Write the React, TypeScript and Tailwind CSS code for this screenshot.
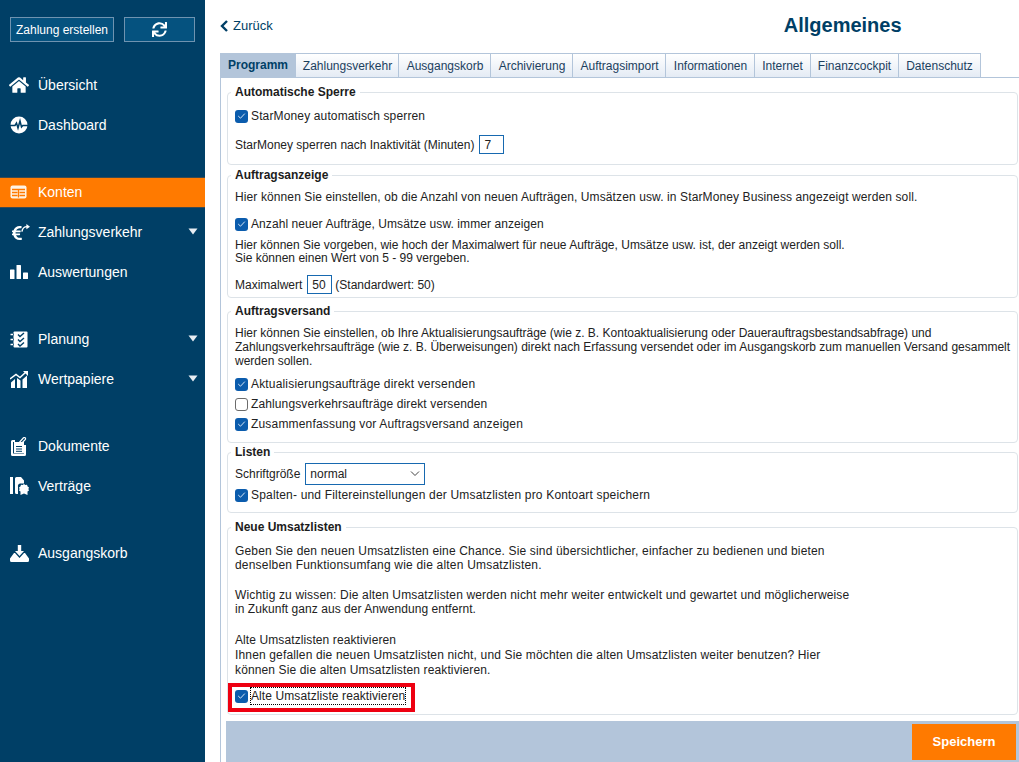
import React from "react";
import { FaHome, FaSync, FaEuroSign } from "react-icons/fa";

const Caret = () => (
  <svg width="10" height="7" viewBox="0 0 10 7" className="absolute right-[7px] top-[16px]">
    <path d="M0.5 0.5H9.5L5 6.5Z" fill="#e8eef3" />
  </svg>
);

const IconDash = () => (
  <svg width="18" height="18" viewBox="0 0 18 18">
    <circle cx="9" cy="9" r="8.5" fill="#fff" />
    <path d="M0 9.5H5L6.5 7L8 12L10 5L11.5 11L12.8 9.5H18" fill="none" stroke="#003f66" strokeWidth="1.5" />
  </svg>
);
const IconKonten = () => (
  <svg width="17" height="14" viewBox="0 0 17 14">
    <rect x="0.5" y="0.5" width="16" height="13" rx="2" fill="#fff3e4" />
    <path d="M2 4.5H15M2 7.5H7.5M9.5 7.5H15M2 10.5H7.5M9.5 10.5H15M8.5 4.5V12.5" stroke="#ff7a00" strokeWidth="1.3" />
  </svg>
);
const IconZahlung = () => (
  <span className="relative block w-[21px] h-[16px] -ml-[1px]">
    <FaEuroSign className="absolute left-0 top-[1px] text-white" size={16} />
    <svg width="9" height="10" viewBox="0 0 10 10" className="absolute right-0 top-[-1px]">
      <path d="M1 9C1.5 5.5 3.5 3.5 7 3.5" fill="none" stroke="#fff" strokeWidth="1.6" />
      <path d="M6 0.5L10 3.5L6 6.5Z" fill="#fff" />
    </svg>
  </span>
);
const IconBars = () => (
  <svg width="18" height="14" viewBox="0 0 18 14">
    <rect x="0" y="4.5" width="4.5" height="9.5" rx="0.6" fill="#fff" />
    <rect x="6.5" y="0" width="4.5" height="14" rx="0.6" fill="#fff" />
    <rect x="13" y="7.5" width="5" height="6.5" rx="0.6" fill="#fff" />
  </svg>
);
const IconPlan = () => (
  <svg width="18" height="17" viewBox="0 0 18 17">
    <path d="M4.5 0.5H16.5A1 1 0 0 1 17.5 1.5V15.5A1 1 0 0 1 16.5 16.5H4.5A1 1 0 0 1 3.5 15.5V1.5A1 1 0 0 1 4.5 0.5Z" fill="#fff" />
    <path d="M0.5 3.5H6M0.5 8.5H6M0.5 13.5H6" stroke="#fff" strokeWidth="1.4" />
    <path d="M3.5 2.5V4.5M3.5 7.5V9.5M3.5 12.5V14.5" stroke="#003f66" strokeWidth="0.8" />
    <path d="M8 3.5L10 5.5L14 2M8 8.5L10 10.5L14 7M8 13L10 15L14 11.5" fill="none" stroke="#003f66" strokeWidth="1.4" />
  </svg>
);
const IconStocks = () => (
  <svg width="19" height="17" viewBox="0 0 19 17">
    <path d="M0 8L6 3.5L10 6.5L16 1" fill="none" stroke="#fff" strokeWidth="1.5" />
    <path d="M13 0H18V5Z" fill="#fff" />
    <path d="M1 17V11.5L5 8L5 17ZM7 17V7L10.5 9.5V17ZM12.5 17V8.5L17 4.5V17Z" fill="#fff" />
  </svg>
);
const IconDoc = () => (
  <svg width="17" height="19" viewBox="0 0 17 19">
    <path d="M2.5 3H5V5H3V16.5H14V8H16V17.5A1.5 1.5 0 0 1 14.5 19H2.5A1.5 1.5 0 0 1 1 17.5V4.5A1.5 1.5 0 0 1 2.5 3Z" fill="#fff" />
    <rect x="4" y="5" width="10" height="11" fill="#fff" />
    <path d="M6 9.5H12M6 12H12M6 14.3H12" stroke="#003f66" strokeWidth="1" />
    <path d="M8 7L13.5 0.8C14.5 0 16 1 15.4 2.3L10 8" fill="none" stroke="#fff" strokeWidth="1.2" />
  </svg>
);
const IconVertrag = () => (
  <svg width="19" height="18" viewBox="0 0 19 18">
    <rect x="0" y="0" width="3" height="17" fill="#fff" />
    <path d="M5 1.5A1.5 1.5 0 0 1 6.5 0H11L14 3.5V6.5H10A3 3 0 0 0 8 10V17H6.5A1.5 1.5 0 0 1 5 15.5Z" fill="#fff" />
    <path d="M14 7L15.3 8L17 7.8L17.6 9.4L19 10.4L18.4 12L19 13.6L17.5 14.4L17.5 18L14 16.6L10.5 18L10.5 14.4L9 13.6L9.6 12L9 10.4L10.4 9.4L11 7.8L12.7 8Z" fill="#fff" />
  </svg>
);
const IconOut = () => (
  <svg width="19" height="17" viewBox="0 0 19 17">
    <path d="M7.8 0H11.2V6H14L9.5 11L5 6H7.8Z" fill="#fff" />
    <path d="M4 8H5L9.5 13L14 8H15L19 13.5V15.5A1.5 1.5 0 0 1 17.5 17H1.5A1.5 1.5 0 0 1 0 15.5V13.5Z" fill="#fff" />
  </svg>
);

function NavItem({ icon, label, caret, active }: { icon: React.ReactNode; label: string; caret?: boolean; active?: boolean }) {
  return (
    <div className="relative h-10 flex items-center">
      <div className={"flex items-center w-full h-[31px] " + (active ? "bg-[#ff7a00] border-y border-[#3c4a50]" : "")}>
        <span className="w-[38px] pl-[10px] flex items-center shrink-0">{icon}</span>
        <span className="text-[14px] text-white">{label}</span>
      </div>
      {caret && <Caret />}
    </div>
  );
}

function Sidebar() {
  return (
    <aside className="w-[205px] shrink-0 h-[762px] bg-[#003f66]">
      <div className="flex gap-[10px] pl-[10px] pt-[17px] h-[65px]">
        <div className="w-[104px] h-[25px] flex items-center justify-center border border-[#6f93b0] bg-[#05527f] text-white text-[12px]">Zahlung erstellen</div>
        <div className="w-[71px] h-[25px] flex items-center justify-center border border-[#6f93b0] bg-[#05527f] text-white">
          <FaSync size={15} />
        </div>
      </div>
      <nav className="flex flex-col gap-[27px]">
        <div>
          <NavItem icon={<FaHome size={20} color="#fff" className="-ml-[1px]" />} label="Übersicht" />
          <NavItem icon={<IconDash />} label="Dashboard" />
        </div>
        <div>
          <NavItem icon={<IconKonten />} label="Konten" active />
          <NavItem icon={<IconZahlung />} label="Zahlungsverkehr" caret />
          <NavItem icon={<IconBars />} label="Auswertungen" />
        </div>
        <div>
          <NavItem icon={<IconPlan />} label="Planung" caret />
          <NavItem icon={<IconStocks />} label="Wertpapiere" caret />
        </div>
        <div>
          <NavItem icon={<IconDoc />} label="Dokumente" />
          <NavItem icon={<IconVertrag />} label="Verträge" />
        </div>
        <NavItem icon={<IconOut />} label="Ausgangskorb" />
      </nav>
    </aside>
  );
}

const tabs: [string, number, string][] = [
  ["Zahlungsverkehr", 103, "pl-[1px]"],
  ["Ausgangskorb", 92, "pl-[1px]"],
  ["Archivierung", 82, "pl-[1px]"],
  ["Auftragsimport", 93, "pl-[1px]"],
  ["Informationen", 89, "pl-[1px]"],
  ["Internet", 56, ""],
  ["Finanzcockpit", 88, ""],
  ["Datenschutz", 82, ""],
];

function Tabs() {
  return (
    <div className="flex h-[25px] border-b border-[#b3c5da] shrink-0">
      <div className="w-[76px] h-[24px] flex items-center justify-center bg-[#b3c5da] text-[#003f66] font-bold text-[12px]">Programm</div>
      {tabs.map(([t, w, pad]) => (
        <div
          key={t}
          style={{ width: w }}
          className={"h-[24px] flex items-center justify-center border-t border-r border-[#b3c5da] bg-gradient-to-b from-white to-[#e4ebf4] text-[#1c3f5e] text-[12px] " + pad}
        >
          {t}
        </div>
      ))}
    </div>
  );
}

function Check({ checked = true }: { checked?: boolean }) {
  return checked ? (
    <span className="w-[13px] h-[13px] rounded-[3px] bg-[#0b5cad] flex items-center justify-center shrink-0">
      <svg width="9" height="8" viewBox="0 0 9 8">
        <path d="M1.2 4L3.5 6.2L7.8 1.6" fill="none" stroke="#d3e4f5" strokeWidth="1" />
      </svg>
    </span>
  ) : (
    <span className="w-[13px] h-[13px] rounded-[3px] border border-[#6b6b6b] bg-white shrink-0" />
  );
}

function CheckRow({ label, checked = true, className = "", track = "" }: { label: string; checked?: boolean; className?: string; track?: string }) {
  return (
    <div className={"flex items-center gap-[3px] h-[14px] " + className}>
      <Check checked={checked} />
      <span className={track}>{label}</span>
    </div>
  );
}

function Group({ title, children, className = "" }: { title: string; children: React.ReactNode; className?: string }) {
  return (
    <fieldset className={"border border-[#dde3e8] rounded-[4px] pl-[7px] pr-[4px] " + className}>
      <legend className="-ml-[4px] px-[4px] font-bold text-[12px] leading-[14px] text-[#1c1c1c]">{title}</legend>
      {children}
    </fieldset>
  );
}

const Box = ({ children, className = "" }: { children: React.ReactNode; className?: string }) => (
  <span className={"h-[19px] flex items-center border border-[#1769b0] pl-[4px] bg-white " + className}>{children}</span>
);

function Panel() {
  return (
    <div className="pl-[6px] pr-[1px] pt-[7px] text-[12px] leading-[14px] text-[#222]">
      <Group title="Automatische Sperre" className="h-[80px] mb-[3px]">
        <CheckRow label="StarMoney automatisch sperren" className="mt-[10px]" track="tracking-[0.14px]" />
        <div className="flex items-center gap-[5px] mt-[12px]">
          <span>StarMoney sperren nach Inaktivität (Minuten)</span>
          <Box className="w-[25px]">7</Box>
        </div>
      </Group>
      <Group title="Auftragsanzeige" className="h-[130px] mb-[6px]">
        <p className="mt-[8px] tracking-[0.11px]">Hier können Sie einstellen, ob die Anzahl von neuen Aufträgen, Umsätzen usw. in StarMoney Business angezeigt werden soll.</p>
        <CheckRow label="Anzahl neuer Aufträge, Umsätze usw. immer anzeigen" className="mt-[13px]" track="tracking-[0.08px]" />
        <p className="mt-[8px] leading-[13px]">
          Hier können Sie vorgeben, wie hoch der Maximalwert für neue Aufträge, Umsätze usw. ist, der anzeigt werden soll.
          <br />
          Sie können einen Wert von 5 - 99 vergeben.
        </p>
        <div className="flex items-center mt-[10px]">
          <span className="mr-[5px]">Maximalwert</span>
          <Box className="w-[25px] mr-[3px]">50</Box>
          <span>(Standardwert: 50)</span>
        </div>
      </Group>
      <Group title="Auftragsversand" className="h-[139px] mb-[2px]">
        <p className="mt-[8px]">
          Hier können Sie einstellen, ob Ihre Aktualisierungsaufträge (wie z. B. Kontoaktualisierung oder Dauerauftragsbestandsabfrage) und
          <br />
          Zahlungsverkehrsaufträge (wie z. B. Überweisungen) direkt nach Erfassung versendet oder im Ausgangskorb zum manuellen Versand gesammelt
          <br />
          werden sollen.
        </p>
        <CheckRow label="Aktualisierungsaufträge direkt versenden" className="mt-[9px]" track="tracking-[0.17px]" />
        <CheckRow label="Zahlungsverkehrsaufträge direkt versenden" checked={false} className="mt-[6px]" track="tracking-[0.12px]" />
        <CheckRow label="Zusammenfassung vor Auftragsversand anzeigen" className="mt-[6px]" track="tracking-[0.18px]" />
      </Group>
      <Group title="Listen" className="h-[68px] mb-[7px]">
        <div className="flex items-center gap-[5px] mt-[4px]">
          <span>Schriftgröße</span>
          <div className="w-[120px] h-[22px] flex items-center justify-between border border-[#1769b0] pl-[4px] pr-[3px]">
            <span>normal</span>
            <svg width="12" height="8" viewBox="0 0 12 8">
              <path d="M2 1.5L6 5.5L10 1.5" fill="none" stroke="#444" strokeWidth="1" />
            </svg>
          </div>
        </div>
        <CheckRow label="Spalten- und Filtereinstellungen der Umsatzlisten pro Kontoart speichern" className="mt-[3px]" track="tracking-[0.18px]" />
      </Group>
      <Group title="Neue Umsatzlisten" className="h-[195px] mb-[6px]">
        <p className="mt-[10px]">
          <span className="tracking-[0.16px]">Geben Sie den neuen Umsatzlisten eine Chance. Sie sind übersichtlicher, einfacher zu bedienen und bieten</span>
          <br />
          <span className="tracking-[0.2px]">denselben Funktionsumfang wie die alten Umsatzlisten.</span>
        </p>
        <p className="mt-[16px]">
          <span className="tracking-[0.16px]">Wichtig zu wissen: Die alten Umsatzlisten werden nicht mehr weiter entwickelt und gewartet und möglicherweise</span>
          <br />
          <span className="tracking-[0.05px]">in Zukunft ganz aus der Anwendung entfernt.</span>
        </p>
        <p className="mt-[17px] leading-[15px]">
          <span className="tracking-[0.1px]">Alte Umsatzlisten reaktivieren</span>
          <br />
          <span className="tracking-[0.15px]">Ihnen gefallen die neuen Umsatzlisten nicht, und Sie möchten die alten Umsatzlisten weiter benutzen? Hier</span>
          <br />
          <span className="tracking-[0.13px]">können Sie die alten Umsatzlisten reaktivieren.</span>
        </p>
        <div className="relative flex items-center gap-[2px] h-[18px] mt-[9px]">
          <Check />
          <span className="h-[18px] flex items-center border border-dotted border-black tracking-[0.1px]">Alte Umsatzliste reaktivieren</span>
          <span className="absolute left-[-7px] top-[-4px] w-[187px] h-[29px] border-[4px] border-[#ee0011]" />
        </div>
      </Group>
    </div>
  );
}

export default function App() {
  return (
    <div className="flex w-[1019px] h-[762px] overflow-hidden bg-white font-['Liberation_Sans',Arial,sans-serif]">
      <Sidebar />
      <main className="flex-1 flex flex-col pl-[15px] min-w-0">
        <header className="h-[53px] flex items-start relative shrink-0">
          <div className="flex items-center gap-[4px] mt-[18px] text-[#003f66] text-[13px] leading-[16px]">
            <svg width="9" height="12" viewBox="0 0 9 12">
              <path d="M7 1L2 6L7 11" fill="none" stroke="#003f66" strokeWidth="2.4" />
            </svg>
            <span>Zurück</span>
          </div>
          <h1 className="ml-[511px] mt-[13px] text-[20px] leading-[24px] font-bold text-[#003f66]">Allgemeines</h1>
        </header>
        <Tabs />
        <div className="flex-1 flex flex-col border-l border-[#b3c5da]">
          <Panel />
          <div className="ml-[5px] flex-1 bg-[#b3c5da] flex justify-end items-start pt-[3px] pr-[3px]">
            <div className="w-[104px] h-[36px] bg-[#ff7a00] flex items-center justify-center text-white font-bold text-[13px]">Speichern</div>
          </div>
        </div>
      </main>
    </div>
  );
}
